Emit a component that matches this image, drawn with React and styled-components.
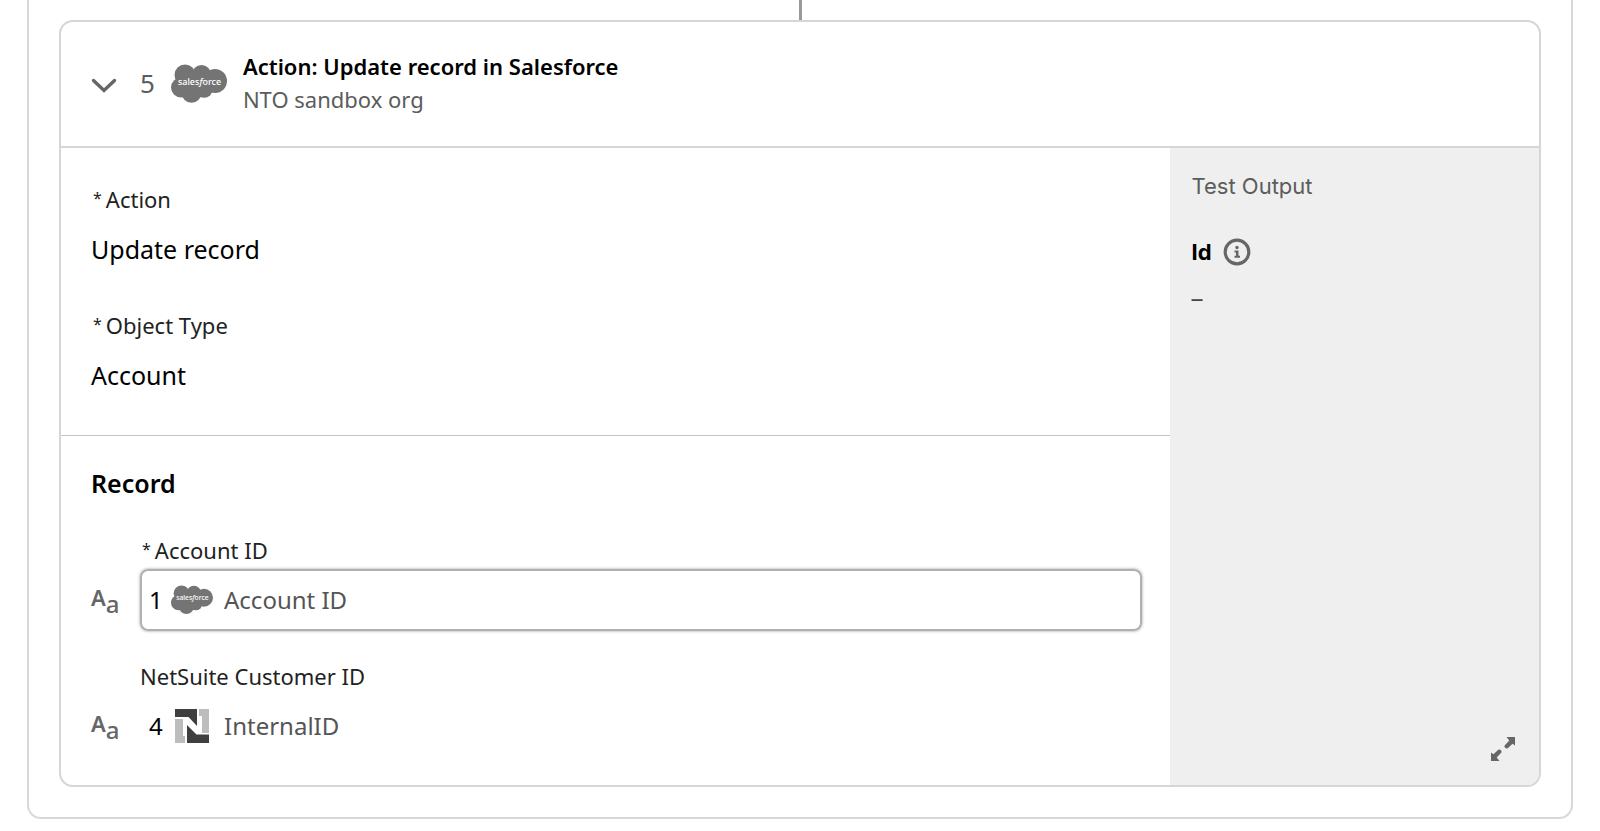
import styled, { createGlobalStyle } from 'styled-components'

const GlobalStyle = createGlobalStyle`
  * {
    box-sizing: border-box;
  }

  body {
    margin: 0;
    background: #fff;
    color: #000;
    font-family: 'Noto Sans', 'Open Sans', sans-serif;
    font-size: 22px;
    line-height: 32px;
  }
`

const Page = styled.main`
  padding: 0 27px 13px;
`

const Flow = styled.section`
  padding: 0 30px 30px;
  border: 2px solid #d8d8d8;
  border-top: 0;
  border-radius: 0 0 14px 14px;
`

const Connector = styled.div`
  width: 3px;
  height: 20px;
  margin: 0 auto;
  background: #999;
`

const Card = styled.article`
  border: 2px solid #d6d6d6;
  border-radius: 14px;
  overflow: hidden;
`

const CardHeader = styled.header`
  display: flex;
  align-items: center;
  padding: 28px 30px 30px;
  border-bottom: 2px solid #d6d6d6;

  h2 {
    margin: 0;
    font-size: 22px;
    font-weight: 600;
  }

  p {
    margin: 0;
    color: #5c5c5c;
    line-height: 34px;
  }
`

const IconButton = styled.button`
  display: flex;
  padding: 0;
  border: 0;
  background: none;
  color: #666;
  cursor: pointer;
`

const StepNumber = styled.span`
  margin: 0 16px 0 23px;
  color: #5c5c5c;
  font-size: 26px;
`

const Heading = styled.div`
  margin-left: 16px;
`

const Body = styled.div`
  display: flex;
`

const Main = styled.div`
  width: 75%;
`

const Summary = styled.dl`
  margin: 0;
  padding: 35px 30px 0;
  border-bottom: 1px solid #c4c4c4;

  dd {
    margin: 17px 0 43px;
    font-size: 25px;
    line-height: 34px;
  }
`

const Label = styled.span`
  display: block;
  color: #222;
`

const Required = styled.span`
  margin: 0 4px 0 2px;
  font-size: 16px;
  line-height: 16px;
  vertical-align: 4px;
`

const Record = styled.section`
  padding: 30px 28px 28px 30px;

  h3 {
    margin: 0 0 34px;
    font-size: 25px;
    font-weight: 600;
    line-height: 34px;
  }
`

const FieldRow = styled.div`
  display: grid;
  grid-template-columns: 49px 1fr;
  row-gap: 3px;
  align-items: center;

  & + & {
    margin-top: 29px;
  }

  label {
    grid-column: 2;
    color: #222;
  }
`

const Field = styled.div`
  display: flex;
  align-items: center;
  height: 62px;
  padding: 0 7px;
  border: 2px solid ${({ $active }) => ($active ? '#b0b0b0' : 'transparent')};
  border-radius: 8px;
  box-shadow: ${({ $active }) => ($active ? '0 0 3px #999' : 'none')};
  font-size: 24px;

  svg {
    flex: none;
  }

  input {
    flex: 1;
    min-width: 0;
    padding: 0;
    border: 0;
    outline: 0;
    background: none;
    color: #555;
    font: inherit;
  }
`

const Source = styled.span`
  width: 22px;
`

const LogoSlot = styled.span`
  display: flex;
  justify-content: center;
  width: 42px;
  margin-right: 11px;
`

const TextType = styled.span`
  display: flex;
  align-items: flex-start;
  color: #666;
  line-height: 24px;

  b {
    font-size: 22px;
    font-weight: 600;
  }

  span {
    padding-top: 7px;
    font-size: 24px;
    font-weight: 500;
  }
`

const Output = styled.aside`
  display: flex;
  flex-direction: column;
  width: 25%;
  padding: 22px 24px 24px 22px;
  background: #efefef;
  font-family: Inter, sans-serif;

  h3 {
    margin: 0 0 34px;
    color: #5c5c5c;
    font-size: 22px;
    font-weight: 400;
  }

  > ${IconButton} {
    margin: auto 0 0 auto;
  }
`

const OutputName = styled.div`
  display: flex;
  align-items: center;
  gap: 11px;
  font-weight: 700;
`

const OutputValue = styled.div`
  margin-top: 15px;
  color: #444;
`

const SalesforceLogo = ({ width }) => (
  <svg width={width} viewBox="0 0 56 39" role="img" aria-label="Salesforce">
    <g fill="#747474">
      <circle cx="14" cy="11" r="10.5" />
      <circle cx="30.500" cy="10.500" r="9.500" />
      <circle cx="44" cy="17" r="12" />
      <circle cx="10" cy="23.500" r="10" />
      <circle cx="20.500" cy="29" r="9.800" />
      <circle cx="33" cy="25" r="8.800" />
      <path d="M12 9h26v18H12z" />
    </g>
    <text x="28.500" y="20.500" fill="#fff" fontFamily="Noto Sans, sans-serif" fontSize="9" fontWeight="500" textAnchor="middle">
      sales<tspan fontStyle="italic">f</tspan>orce
    </text>
  </svg>
)

const NetSuiteLogo = () => (
  <svg width="34" height="34" viewBox="0 0 34 34" role="img" aria-label="NetSuite">
    <path fill="#bdbdbd" d="M0 10h8v17h2v7H0zM24 0h10v24h-7V7h-3z" />
    <path fill="#3f3f3f" d="M0 0h22v17L13.500 8H0zM12 16l9.500 9.500H34V34H12z" />
  </svg>
)

const ChevronIcon = () => (
  <svg width="26" height="26" viewBox="0 0 26 26" aria-hidden="true">
    <path d="M2.500 10.500 13 20.500 23.500 10.500" fill="none" stroke="currentColor" strokeWidth="3.400" strokeLinecap="round" strokeLinejoin="miter" />
  </svg>
)

const InfoIcon = () => (
  <svg width="28" height="28" viewBox="0 0 28 28" aria-hidden="true">
    <circle cx="14" cy="14" r="11.800" fill="none" stroke="currentColor" strokeWidth="3.200" />
    <circle cx="14" cy="9.500" r="1.700" fill="currentColor" />
    <path d="M11.500 12.500h4v5.200h1.500v2h-5.500v-2h1.500v-3.200h-1.500z" fill="currentColor" />
  </svg>
)

const ExpandIcon = () => (
  <svg width="24" height="24" viewBox="0 0 24 24" aria-hidden="true">
    <g fill="currentColor">
      <path d="M15.500 0H24v8.500l-2.500-1.800-4.800 4.500-1.700.2-1.500-1.400.1-1.600 4.700-4.900z" />
      <path d="M8.500 24H0v-8.500l2.500 1.800 4.800-4.500 1.700-.2 1.500 1.400-.1 1.600-4.700 4.900z" />
    </g>
  </svg>
)

const MappedField = ({ id, label, required, active, source, logo, value }) => (
  <FieldRow>
    <label htmlFor={id}>
      {required && <Required>*</Required>}
      {label}
    </label>
    <TextType aria-hidden="true">
      <b>A</b>
      <span>a</span>
    </TextType>
    <Field $active={active}>
      <Source>{source}</Source>
      <LogoSlot>{logo}</LogoSlot>
      <input id={id} type="text" defaultValue={value} />
    </Field>
  </FieldRow>
)

const App = () => (
  <Page>
    <GlobalStyle />
    <Flow>
      <Connector />
      <Card>
        <CardHeader>
          <IconButton type="button" aria-label="Collapse step">
            <ChevronIcon />
          </IconButton>
          <StepNumber>5</StepNumber>
          <SalesforceLogo width={56} />
          <Heading>
            <h2>Action: Update record in Salesforce</h2>
            <p>NTO sandbox org</p>
          </Heading>
        </CardHeader>
        <Body>
          <Main>
            <Summary>
              <dt>
                <Label><Required>*</Required>Action</Label>
              </dt>
              <dd>Update record</dd>
              <dt>
                <Label><Required>*</Required>Object Type</Label>
              </dt>
              <dd>Account</dd>
            </Summary>
            <Record>
              <h3>Record</h3>
              <MappedField
                id="account-id"
                label="Account ID"
                required
                active
                source="1"
                logo={<SalesforceLogo width={42} />}
                value="Account ID"
              />
              <MappedField
                id="customer-id"
                label="NetSuite Customer ID"
                source="4"
                logo={<NetSuiteLogo />}
                value="InternalID"
              />
            </Record>
          </Main>
          <Output>
            <h3>Test Output</h3>
            <OutputName>
              Id
              <IconButton type="button" aria-label="About Id">
                <InfoIcon />
              </IconButton>
            </OutputName>
            <OutputValue>–</OutputValue>
            <IconButton type="button" aria-label="Expand test output">
              <ExpandIcon />
            </IconButton>
          </Output>
        </Body>
      </Card>
    </Flow>
  </Page>
)

export default App
